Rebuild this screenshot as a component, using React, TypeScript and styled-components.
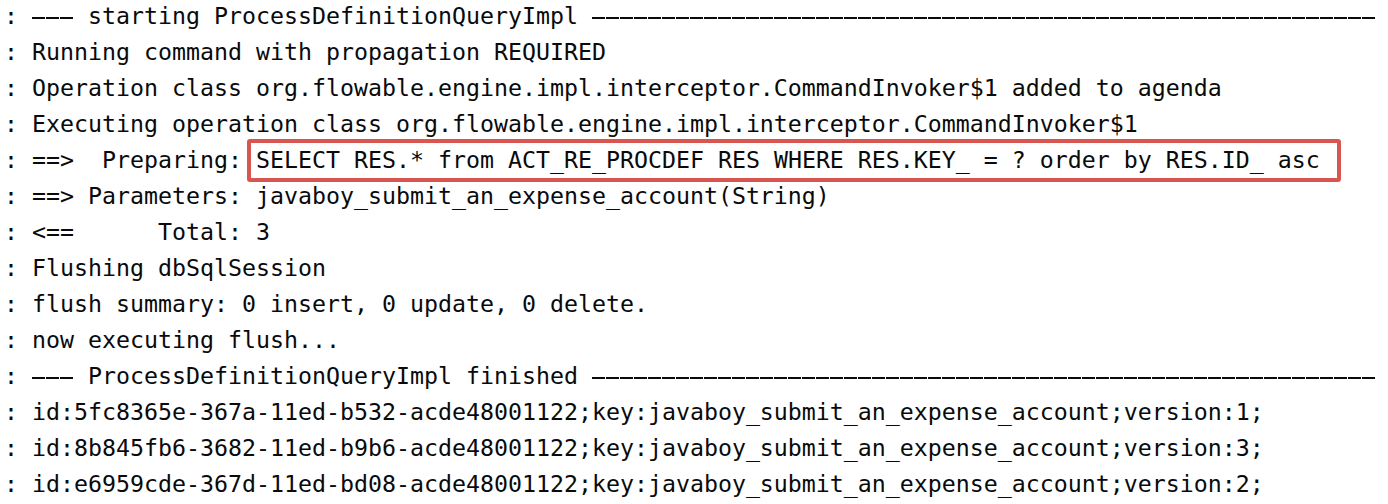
import React from "react";
import styled, { createGlobalStyle } from "styled-components";

const GlobalStyle = createGlobalStyle`
  html, body {
    margin: 0;
    padding: 0;
    background: #ffffff;
    overflow: hidden;
  }
`;

const Console = styled.div`
  margin-top: -2px;
  padding-left: 4px;
  font-family: "DejaVu Sans Mono", "Liberation Mono", monospace;
  font-size: 23.25px;
  line-height: 36px;
  color: #0a0a0a;
  white-space: pre;
`;

const Line = styled.div`
  height: 36px;
`;

const Rule = styled.span`
  background-image: linear-gradient(to right, #0a0a0a 0 13px, transparent 13px 14px);
  background-size: 14px 2px;
  background-repeat: repeat-x;
  background-position: 0 14.5px;
`;

const Highlight = styled.span`
  border: 4px solid #d85550;
  border-radius: 3px;
  padding: 3px 17px 5px 5px;
  margin-left: -9px;
  margin-right: -21px;
`;

type LogLine = { text: string; banner?: boolean; sql?: string };

const lines: LogLine[] = [
  { text: "starting ProcessDefinitionQueryImpl ", banner: true },
  { text: ": Running command with propagation REQUIRED" },
  { text: ": Operation class org.flowable.engine.impl.interceptor.CommandInvoker$1 added to agenda" },
  { text: ": Executing operation class org.flowable.engine.impl.interceptor.CommandInvoker$1" },
  {
    text: ": ==>  Preparing: ",
    sql: "SELECT RES.* from ACT_RE_PROCDEF RES WHERE RES.KEY_ = ? order by RES.ID_ asc",
  },
  { text: ": ==> Parameters: javaboy_submit_an_expense_account(String)" },
  { text: ": <==      Total: 3" },
  { text: ": Flushing dbSqlSession" },
  { text: ": flush summary: 0 insert, 0 update, 0 delete." },
  { text: ": now executing flush..." },
  { text: "ProcessDefinitionQueryImpl finished ", banner: true },
  { text: ": id:5fc8365e-367a-11ed-b532-acde48001122;key:javaboy_submit_an_expense_account;version:1;" },
  { text: ": id:8b845fb6-3682-11ed-b9b6-acde48001122;key:javaboy_submit_an_expense_account;version:3;" },
  { text: ": id:e6959cde-367d-11ed-bd08-acde48001122;key:javaboy_submit_an_expense_account;version:2;" },
];

export default function App() {
  return (
    <>
      <GlobalStyle />
      <Console>
        {lines.map((l, i) => (
          <Line key={i}>
            {l.banner ? (
              <>
                {": "}
                <Rule>---</Rule>
                {" " + l.text}
                <Rule>{"-".repeat(56)}</Rule>
              </>
            ) : (
              l.text
            )}
            {l.sql && <Highlight>{l.sql}</Highlight>}
          </Line>
        ))}
      </Console>
    </>
  );
}
